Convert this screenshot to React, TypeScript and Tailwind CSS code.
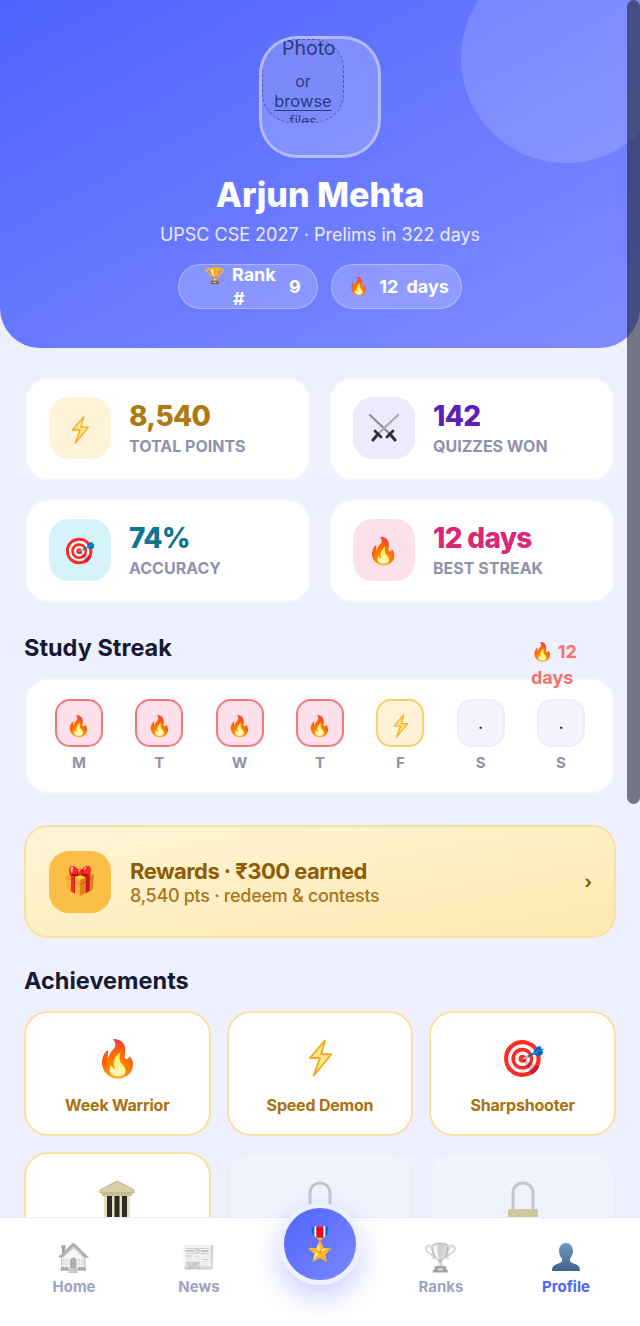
import React from 'react'

const font = { fontFamily: 'Inter, "Noto Color Emoji", sans-serif' }

const Bolt = ({ className }: { className: string }) => (
  <svg className={className} viewBox="0 0 20 30" fill="none">
    <path d="M14 1 2 15h8L5 29 19 12h-8z" fill="#fde68a" stroke="#f2a91c" strokeWidth="1.4" strokeLinejoin="round" />
  </svg>
)

const Swords = () => (
  <svg className="w-[30px] h-[28px]" viewBox="0 0 30 28" fill="none" strokeLinecap="round">
    <path d="M1 1 21 20" stroke="#8b8f98" strokeWidth="2.2" />
    <path d="M29 1 9 20" stroke="#a7abb2" strokeWidth="2.2" />
    <path d="M6 17 12 23M24 17 18 23" stroke="#2d3038" strokeWidth="2.8" />
    <path d="M9 20 4 26M21 20 26 26" stroke="#2d3038" strokeWidth="3" />
  </svg>
)

const Temple = () => (
  <svg className="w-[36px] h-[50px] mt-[12px]" viewBox="0 0 36 50" fill="none">
    <path d="M18 1 35 10v3H1v-3z" fill="#d8cfa8" stroke="#a89f78" strokeWidth="0.8" />
    <rect x="3" y="13" width="30" height="3" fill="#c6bd94" />
    <rect x="5" y="16" width="26" height="21" fill="#e6dfc2" />
    <rect x="8" y="16" width="5" height="21" fill="#2f2a22" />
    <rect x="15.5" y="16" width="5" height="21" fill="#2f2a22" />
    <rect x="23" y="16" width="5" height="21" fill="#2f2a22" />
    <rect x="2" y="37" width="32" height="3" fill="#cfc6a0" />
  </svg>
)

const Lock = () => (
  <svg className="w-[32px] h-[50px] mt-[14px]" viewBox="0 0 32 50" fill="none">
    <path d="M6 30V12a10 10 0 0 1 20 0v18" stroke="#c3c7cc" strokeWidth="3" />
    <rect x="1" y="28" width="30" height="21" rx="2" fill="#cfc9a0" />
  </svg>
)

const Person = () => (
  <svg className="w-[28px] h-[28px]" viewBox="0 0 28 28">
    <defs>
      <linearGradient id="person" x1="0" y1="0" x2="0" y2="1">
        <stop offset="0" stopColor="#7399be" />
        <stop offset="1" stopColor="#3f638a" />
      </linearGradient>
    </defs>
    <path d="M14 0c4.200 0 7 3.400 7 7.800 0 3.200-1.300 6-3 7.700v2.200c0 1.300 2.300 2.300 5 3.300 3 1.100 5 2.500 5 7H0c0-4.500 2-5.900 5-7 2.700-1 5-2 5-3.300v-2.200c-1.700-1.700-3-4.500-3-7.700C7 3.400 9.800 0 14 0z" fill="url(#person)" />
  </svg>
)

const stats = [
  { icon: <Bolt className="w-[20px] h-[28px] mt-[3px]" />, value: '8,540', label: 'TOTAL POINTS', box: 'bg-[#fef3d6]', text: 'text-[#b07a12]' },
  { icon: <Swords />, value: '142', label: 'QUIZZES WON', box: 'bg-[#ede9fe]', text: 'text-[#5b21b6]' },
  { icon: '🎯', value: '74%', label: 'ACCURACY', box: 'bg-[#d5f3f8]', text: 'text-[#0e7490]' },
  { icon: '🔥', value: '12 days', label: 'BEST STREAK', box: 'bg-[#fce0ea]', text: 'text-[#db2777]' },
]

const days = [
  { d: 'M', icon: '🔥', box: 'bg-[#fde0e8] border-[#f07a7a]' },
  { d: 'T', icon: '🔥', box: 'bg-[#fde0e8] border-[#f07a7a]' },
  { d: 'W', icon: '🔥', box: 'bg-[#fde0e8] border-[#f07a7a]' },
  { d: 'T', icon: '🔥', box: 'bg-[#fde0e8] border-[#f07a7a]' },
  { d: 'F', icon: 'bolt', box: 'bg-[#fef3d6] border-[#fbcf67]' },
  { d: 'S', icon: '·', box: 'bg-[#f3f4fb] border-[#eceef8]' },
  { d: 'S', icon: '·', box: 'bg-[#f3f4fb] border-[#eceef8]' },
]

const badges = [
  { icon: '🔥', label: 'Week Warrior', locked: false },
  { icon: <Bolt className="w-[26px] h-[38px]" />, label: 'Speed Demon', locked: false },
  { icon: '🎯', label: 'Sharpshooter', locked: false },
  { icon: <Temple />, label: 'Polity Pro', locked: false },
  { icon: <Lock />, label: 'Locked', locked: true },
  { icon: <Lock />, label: 'Locked', locked: true },
]

const navLeft = [
  { icon: '🏠', label: 'Home', className: '' },
  { icon: '📰', label: 'News', className: 'ml-[25px]' },
]

const navRight = [
  { icon: '🏆', label: 'Ranks', className: '' },
  { icon: <Person />, label: 'Profile', className: 'ml-[25px]', active: true },
]

type NavEntry = { icon: React.ReactNode; label: string; className: string; active?: boolean }

const NavItem = ({ item }: { item: NavEntry }) => (
  <div className={`w-[100px] flex flex-col items-center ${item.className}`}>
    <span className={`text-[28px] leading-[36px] h-[36px] flex items-center ${item.active ? '' : 'grayscale opacity-60'}`}>{item.icon}</span>
    <span className={`mt-[2px] text-[15px] leading-[20px] font-bold ${item.active ? 'text-[#4f63ff]' : 'text-[#a0a3bd]'}`}>{item.label}</span>
  </div>
)

const App: React.FC = () => {
  return (
    <div className="relative w-[640px] h-[1326px] overflow-hidden flex flex-col bg-[#eef0fe]" style={font}>
      <div className="flex-1 overflow-hidden">
        {/* Header */}
        <div className="relative h-[348px] overflow-hidden rounded-b-[40px] bg-gradient-to-br from-[#4f63ff] to-[#818cff] flex flex-col items-center pt-[36px]">
          <div className="absolute -top-[47px] -right-[31px] w-[210px] h-[210px] rounded-full bg-white/15"></div>
          <div className="relative w-[122px] h-[122px] rounded-[38px] border-[3px] border-white/40 bg-white/20 overflow-hidden">
            <span className="absolute -top-[1px] left-[20px] text-[19.5px] leading-[20px] text-[#2f3a7a]">Photo</span>
            <div className="w-[82px] h-[84px] rounded-[30px] border border-dashed border-[#2f3a7a]/60 bg-[#4f5fd0]/10 overflow-hidden flex flex-col items-center text-[#2f3a7a]">
              <span className="text-[16px] leading-[20px] mt-[31px]">or</span>
              <span className="text-[16.5px] leading-[20px] underline underline-offset-[3px]">browse</span>
              <span className="text-[14px] leading-[18px] mt-[1px]">files</span>
            </div>
          </div>
          <h1 className="mt-[16px] text-[34px] leading-[42px] font-extrabold text-white">Arjun Mehta</h1>
          <p className="mt-[6px] text-[18px] leading-[26px] text-white/85">UPSC CSE 2027 · Prelims in 322 days</p>
          <div className="mt-[16px] flex gap-[13px]">
            <div className="relative w-[140px] h-[45px] overflow-hidden rounded-full border border-white/30 bg-white/20 flex items-center pl-[26px] text-white font-bold text-[18px]">
              <span className="flex flex-col items-start w-[84px] leading-[24px]">
                <span className="flex items-center gap-[7px]">
                  <span className="text-[16px]">🏆</span>
                  <span>Rank</span>
                </span>
                <span className="ml-[28px]">#</span>
              </span>
              <span>9</span>
            </div>
            <div className="w-[131px] h-[45px] rounded-full border border-white/30 bg-white/20 flex items-center justify-center gap-[10px] pl-[4px] text-white font-bold text-[18px]">
              <span className="text-[17px]">🔥</span>
              <span>12</span>
              <span className="-ml-[2px]">days</span>
            </div>
          </div>
        </div>

        {/* Stats */}
        <div className="px-[25px] pt-[29px] grid grid-cols-2 gap-x-[18px] gap-y-[18px]">
          {stats.map((s) => (
            <div key={s.label} className="h-[104px] rounded-[24px] bg-white border-2 border-[#f4f5ff] flex items-center pl-[22px] pb-[2px] gap-[18px]">
              <div className={`w-[62px] h-[62px] rounded-[20px] flex items-center justify-center text-[26px] ${s.box}`}>{s.icon}</div>
              <div>
                <div className={`text-[28px] leading-[36px] font-extrabold tracking-tight ${s.text}`}>{s.value}</div>
                <div className="text-[16px] leading-[24px] font-bold text-[#8f92ad]">{s.label}</div>
              </div>
            </div>
          ))}
        </div>

        {/* Study streak */}
        <div className="px-[25px] mt-[27px] relative">
          <h2 className="-ml-[1px] text-[23.5px] leading-[36px] font-bold text-[#171a33]">Study Streak</h2>
          <div className="absolute top-[9px] left-[531px] w-[50px] text-[18px] leading-[26px] font-bold text-[#f87171] z-10">🔥 12 days</div>
          <div className="mt-[12px] h-[116px] rounded-[24px] bg-white border-2 border-[#f4f5ff] flex justify-between px-[28px] pt-[19px]">
            {days.map((d, i) => (
              <div key={i} className="flex flex-col items-center w-[48px]">
                <div className={`w-[48px] h-[48px] rounded-[15px] border-2 flex items-center justify-center text-[20px] pt-[5px] ${d.box}`}>
                  {d.icon === '·' ? (
                    <span className="text-[#171a33] text-[14px] font-bold -mt-[5px]">.</span>
                  ) : d.icon === 'bolt' ? (
                    <Bolt className="w-[17px] h-[24px]" />
                  ) : (
                    d.icon
                  )}
                </div>
                <span className="mt-[6px] text-[15px] leading-[20px] font-bold text-[#8f92ad]">{d.d}</span>
              </div>
            ))}
          </div>
        </div>

        {/* Rewards */}
        <div className="mx-[24px] mt-[31px] h-[113px] rounded-[24px] border-2 border-[#fde0a0] bg-gradient-to-br from-[#fff5d6] to-[#fde8b0] flex items-center pl-[23px] pr-[22px]">
          <div className="w-[62px] h-[62px] rounded-[20px] bg-[#fbbf47] flex items-center justify-center text-[27px]">🎁</div>
          <div className="ml-[19px] flex-1 pt-[2px]">
            <div className="text-[22px] leading-[26px] font-bold tracking-tight text-[#8f5c06]">Rewards · ₹300 earned</div>
            <div className="text-[18px] leading-[24px] font-medium tracking-[-0.3px] text-[#a9761a]">8,540 pts · redeem & contests</div>
          </div>
          <span className="text-[18px] font-bold text-[#8f5c06]">›</span>
        </div>

        {/* Achievements */}
        <div className="px-[24px] mt-[25px]">
          <h2 className="text-[23.5px] leading-[36px] font-bold text-[#171a33]">Achievements</h2>
          <div className="mt-[12px] grid grid-cols-3 gap-x-[16px] gap-y-[16px]">
            {badges.map((b, i) => (
              <div
                key={i}
                className={`h-[125px] rounded-[24px] border-2 flex flex-col items-center pt-[20px] ${
                  b.locked ? 'border-[#eceefb] bg-[#f0f2fd]' : 'border-[#fde0a0] bg-white'
                }`}
              >
                <span className="text-[36px] leading-[50px] h-[50px] flex items-center justify-center">{b.icon}</span>
                <span className="mt-[10px] text-[16px] leading-[24px] font-bold tracking-[-0.2px] text-[#a9710f]">{b.label}</span>
              </div>
            ))}
          </div>
        </div>
      </div>

      {/* Bottom nav */}
      <div className="relative h-[109px] shrink-0 bg-white border-t border-[#e9ebfa] flex pl-[24px] pt-[21px]">
        {navLeft.map((n) => (
          <NavItem key={n.label} item={n} />
        ))}
        <div className="w-[142px] shrink-0 ml-[0px]"></div>
        <div className="w-[0px] ml-[0px]"></div>
        {navRight.map((n) => (
          <NavItem key={n.label} item={n} />
        ))}
        <div className="absolute -top-[15px] left-[279px] w-[82px] h-[82px] rounded-full border-[5px] border-[#eef0fe] bg-gradient-to-br from-[#4f63ff] to-[#7c88ff] shadow-[0_12px_28px_rgba(79,99,255,0.3)] flex items-center justify-center text-[32px]">
          🎖️
        </div>
      </div>

      {/* Scrollbar thumb */}
      <div className="absolute top-0 right-0 w-[13px] h-[804px] rounded-full bg-[#1f2433]/60"></div>
    </div>
  )
}

export default App
